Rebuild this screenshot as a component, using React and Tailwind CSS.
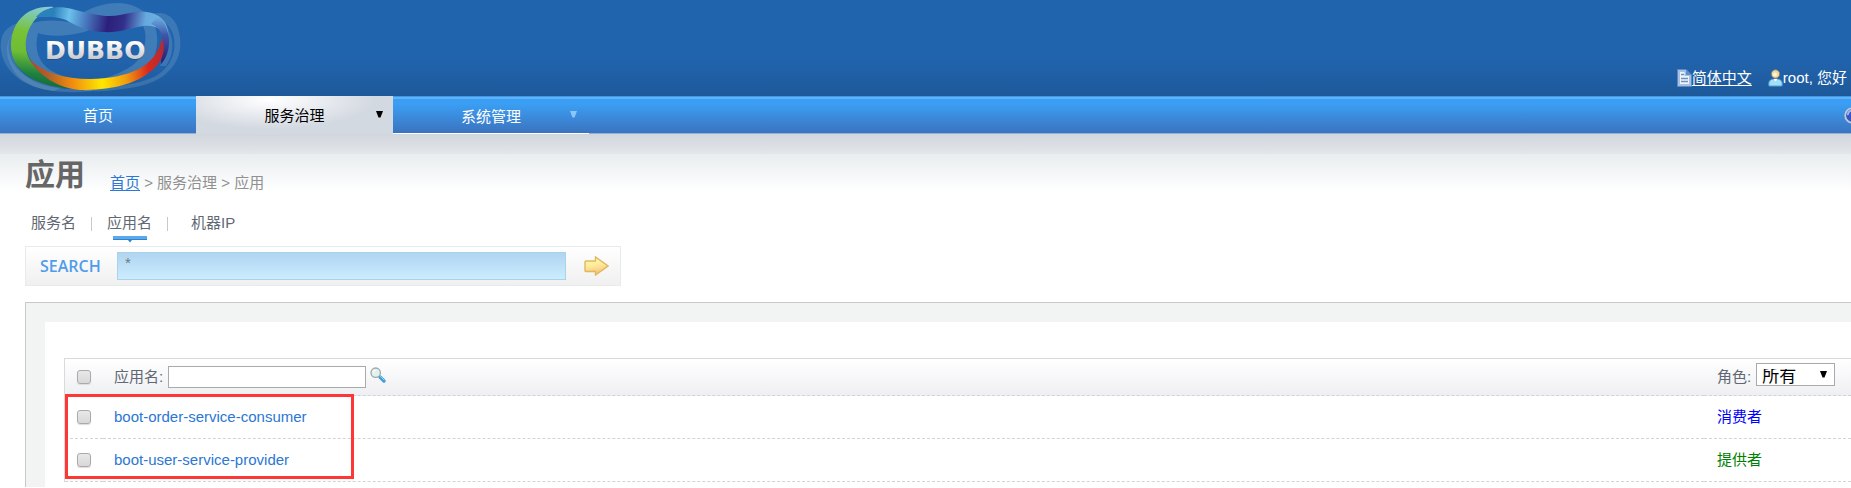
import React from "react";

function Logo() {
  return (
    <svg width="190" height="96" viewBox="0 0 190 96" role="img" aria-label="DUBBO">
      <defs>
        <linearGradient id="green" x1="0.7" y1="0" x2="0.6" y2="1">
          <stop offset="0" stopColor="#8ccbe0" />
          <stop offset="0.15" stopColor="#7cc89c" />
          <stop offset="0.35" stopColor="#78c234" />
          <stop offset="0.6" stopColor="#6fbd35" />
          <stop offset="0.85" stopColor="#1f8140" />
          <stop offset="1" stopColor="#126b3a" />
        </linearGradient>
        <linearGradient id="blue" gradientUnits="userSpaceOnUse" x1="38" y1="10" x2="168" y2="30">
          <stop offset="0" stopColor="#2a83bd" />
          <stop offset="0.12" stopColor="#2b80bb" />
          <stop offset="0.24" stopColor="#6cc0ec" />
          <stop offset="0.36" stopColor="#4a7fc4" />
          <stop offset="0.54" stopColor="#2c1f7a" />
          <stop offset="0.66" stopColor="#31308a" />
          <stop offset="0.82" stopColor="#66a9de" />
          <stop offset="1" stopColor="#6fb4e6" />
        </linearGradient>
        <linearGradient id="side" x1="0" y1="0" x2="0" y2="1">
          <stop offset="0" stopColor="#6fb4e6" />
          <stop offset="0.4" stopColor="#3f55a8" />
          <stop offset="1" stopColor="#2c1a70" />
        </linearGradient>
        <linearGradient id="fire" gradientUnits="userSpaceOnUse" x1="28" y1="70" x2="166" y2="55">
          <stop offset="0" stopColor="#c43a28" />
          <stop offset="0.14" stopColor="#b0602a" />
          <stop offset="0.3" stopColor="#f08a10" />
          <stop offset="0.52" stopColor="#ffe800" />
          <stop offset="0.7" stopColor="#f09a10" />
          <stop offset="0.86" stopColor="#d92a1c" />
          <stop offset="1" stopColor="#b02a38" />
        </linearGradient>
        <linearGradient id="metal" x1="0" y1="0" x2="0" y2="1">
          <stop offset="0.2" stopColor="#ffffff" />
          <stop offset="0.85" stopColor="#c2c4c8" />
        </linearGradient>
      </defs>
      <g fill="#9cc0d2" fillOpacity="0.26">
        <path d="M78 16C90 7 104 3 120 3C136 4 148 12 154 24C161 40 156 62 144 72C132 80 116 86 100 88L88 82C110 78 130 70 138 60C147 46 147 34 143 26L104 30Z" />
        <path d="M28 24C50 18 70 20 92 29C76 36 50 38 38 33C34 48 38 62 50 70C60 76 70 79 84 80L78 86C58 84 42 76 32 62C24 50 24 36 28 24Z" />
      </g>
      <g fill="#9cc0d2" fillOpacity="0.22" fillRule="evenodd">
        <path d="M22 22C4 26 0 36 1 50C4 72 24 88 54 91L62 87C34 84 12 72 9 52C7 38 12 34 22 30Z" />
        <path d="M14 32C2 44 6 66 22 80C40 92 66 94 92 91L90 88C60 91 38 86 26 76C12 64 8 48 14 38Z" />
        <path d="M152 14C168 10 178 20 180 38C183 60 168 80 140 86C122 90 100 92 84 91L84 88C114 88 140 84 156 76C172 66 176 52 174 38C172 26 164 20 152 20Z" />
        <path d="M162 20C174 32 176 52 166 66L160 66C168 50 168 36 160 26Z" />
      </g>
      <path d="M54 7C25 5 11 24 11 46C11 69 32 84 63 88L76 88C55 82 40 72 30 60C20 43 28 16 54 7Z" fill="url(#green)" />
      <path d="M36 17C45 6 60 6 72 9C92 14 106 18 120 15C138 11 153 9 163 20C168 26 169 34 168 39C162 28 154 25 143 26C130 28 120 33 102 32C85 31 75 25 66 20C56 16 48 17 36 17Z" fill="url(#blue)" />
      <path d="M158 16C170 26 171 44 167 54C165 59 163 62 161 64L162 38C161 30 157 26 151 24Z" fill="url(#side)" />
      <path d="M29 59C44 73 64 79 90 79C128 78 156 68 162 38C167 51 161 64 150 72C134 85 109 90 80 90C57 88 40 76 29 59Z" fill="url(#fire)" />
      <text x="45" y="60" className="font-['DejaVu_Sans',sans-serif] text-[25px] font-bold" fill="#24415f" fillOpacity="0.5">DUBBO</text>
      <text x="45" y="59" className="font-['DejaVu_Sans',sans-serif] text-[25px] font-bold" fill="url(#metal)">DUBBO</text>
    </svg>
  );
}

function DocIcon() {
  return (
    <svg width="15" height="18" viewBox="0 0 15 18" aria-hidden="true">
      <path d="M.5.5H9L14.5 6V17.5H.5Z" fill="#a8c0e4" stroke="#5d87c4" />
      <path d="M9 .5V6H14.5Z" fill="#5c8fd0" />
      <path d="M3 3H7.500V7H12V15H3Z" fill="#eef4fb" />
      <path d="M4 5.500H7M4 9.500H11M4 12.500H11" stroke="#6f93b8" strokeWidth="1.500" />
    </svg>
  );
}

function UserIcon() {
  return (
    <svg width="15" height="18" viewBox="0 0 15 18" aria-hidden="true">
      <path d="M1 17C0 11 3 10 7.500 10S15 11 14 17Z" fill="#9fe2f8" stroke="#5a9ad6" />
      <path d="M5.500 10L7.500 12.500L9.500 10Z" fill="#fff" />
      <circle cx="7.500" cy="5" r="4.200" fill="#ecd9a4" stroke="#8a7a5c" strokeWidth=".8" />
      <circle cx="7" cy="5.500" r="2" fill="#fdf6dc" />
    </svg>
  );
}

function SearchIcon() {
  return (
    <svg width="17" height="17" viewBox="0 0 17 17" aria-hidden="true">
      <path d="M10 10L14 14" stroke="#3f9bdc" strokeWidth="3.400" strokeLinecap="round" />
      <path d="M10.500 9.500L14 13" stroke="#8fd0f5" strokeWidth="1" strokeLinecap="round" />
      <circle cx="5.700" cy="5.700" r="4.700" fill="#e2f1ee" stroke="#9aa9a9" strokeWidth="1.300" />
      <path d="M3.300 5.700A2.400 2.400 0 0 1 5.700 3.300" stroke="#fff" fill="none" />
    </svg>
  );
}

function ArrowIcon() {
  return (
    <svg width="25" height="20" viewBox="0 0 25 20" aria-hidden="true">
      <defs>
        <linearGradient id="gold" x1="0.3" y1="0" x2="0.5" y2="1">
          <stop offset="0" stopColor="#fffbb0" />
          <stop offset="0.45" stopColor="#fdec9c" />
          <stop offset="1" stopColor="#fdb878" />
        </linearGradient>
      </defs>
      <path d="M1 6Q1 5 2 5H11.500V1L24 10L11.500 19V15.500H2Q1 15.500 1 14.500Z" fill="url(#gold)" stroke="#dfb95c" strokeWidth="1.400" />
    </svg>
  );
}

function Caret({ className }) {
  return (
    <svg width="7" height="7" viewBox="0 0 7 7" className={className} fill="currentColor" aria-hidden="true">
      <path d="M0 0H7L4.500 6.500H2.500Z" />
    </svg>
  );
}

function Check({ label }) {
  return (
    <input
      type="checkbox"
      aria-label={label}
      className="block size-3.5 appearance-none rounded-[3px] border border-[#aaa] bg-linear-to-b from-[#e8e8e8] to-[#d8d8d8] shadow-[0_1px_1px_#ddd]"
    />
  );
}

const apps = [
  { name: "boot-order-service-consumer", role: "消费者", color: "text-[#0000ff]" },
  { name: "boot-user-service-provider", role: "提供者", color: "text-[#008000]" },
];

export default function App() {
  return (
    <div className="overflow-hidden bg-white font-['Liberation_Sans','Noto_Sans_CJK_SC',sans-serif] text-[15px] leading-5 text-[#5f6873]">
      <header className="flex h-24 items-end justify-between bg-linear-to-b from-[#2164ae] from-60% to-[#1d599a] text-white">
        <Logo />
        <div className="flex gap-4 pr-1 pb-2">
          <a href="#lang" className="flex items-center">
            <DocIcon />
            <span className="underline underline-offset-2">简体中文</span>
          </a>
          <span className="flex items-center">
            <UserIcon />
            root, 您好
          </span>
        </div>
      </header>

      <nav className="flex h-[38px] items-stretch overflow-hidden bg-linear-to-b from-[#3a9ff4] from-20% to-[#3a72bd] shadow-[inset_0_-1px_#8fb1de,inset_0_1px_#3d97ea,inset_0_3px_#62b2f8]">
        <a href="#home" className="flex w-[196px] items-center justify-center pt-0.5 text-white">首页</a>
        <a href="#govern" className="grid w-[197px] grid-cols-[1fr_auto_1fr] items-center bg-[#d3d9e1] bg-radial-[at_38%_10%] from-white to-[#d3d9e1] to-60% px-2.5 pt-0.5 text-black">
          <span />
          服务治理
          <Caret className="mb-1 justify-self-end" />
        </a>
        <a href="#system" className="grid w-[196px] grid-cols-[1fr_auto_1fr] items-center border-b border-white px-3 pt-1 text-white">
          <span />
          系统管理
          <Caret className="mb-1 justify-self-end text-[#8cc6f8]" />
        </a>
        <div className="grow" />
        <button aria-label="帮助" className="-mr-2.5 self-center">
          <svg width="17" height="17" viewBox="0 0 17 17" aria-hidden="true">
            <circle cx="8.500" cy="8.500" r="7.300" fill="#3457c8" stroke="#c5c9d6" strokeWidth="1.800" />
            <path d="M4 8A4 4 0 0 1 8 3.500" stroke="#9fb6f2" strokeWidth="2" fill="none" />
          </svg>
        </button>
      </nav>

      <main className="bg-[linear-gradient(#d1d6dd,#e3e6ea_20px,#e9edef_20px,#fff_58px)] pt-[23px] pl-[25px]">
        <div className="flex items-end gap-[25px]">
          <h1 className="text-[30px] leading-9 font-bold text-[#666]">应用</h1>
          <p className="text-[#909090]">
            <a href="#home" className="text-[#2b77d3] underline underline-offset-2">首页</a> &gt; 服务治理 &gt; 应用
          </p>
        </div>

        <div className="mt-5 flex h-[33px] items-start pl-1.5">
          <a href="#service">服务名</a>
          <span className="mx-[15px] mt-1 h-3.5 w-px bg-[#c9c9cd]" />
          <a href="#app" className="flex flex-col items-center">
            应用名
            <svg width="34" height="7" viewBox="0 0 34 7" className="mt-[3px]" aria-hidden="true">
              <path d="M0 0H34V4H0Z" fill="#58a9ee" />
              <path d="M0 3H34V4H19L17 6.500L15 4H0Z" fill="#3283c8" />
            </svg>
          </a>
          <span className="mx-[15px] mt-1 h-3.5 w-px bg-[#c9c9cd]" />
          <a href="#ip" className="ml-2">机器IP</a>
        </div>

        <form className="flex h-10 w-[596px] items-center border border-[#e8eaeb] bg-linear-to-b from-white to-[#f0f0f0] pl-3.5" onSubmit={(e) => e.preventDefault()}>
          <label htmlFor="keyword" className="w-[77px] font-['Open_Sans',sans-serif] text-[16px] font-semibold text-[#4f9dea]">SEARCH</label>
          <input id="keyword" defaultValue="*" className="h-7 w-[449px] border border-[#a9d3e6] bg-linear-to-b from-[#b0d4f2] to-[#ccedff] px-[7px] pb-2 text-[15px] text-[#777]" />
          <button aria-label="SEARCH" className="ml-[18px]"><ArrowIcon /></button>
        </form>

        <section className="mt-4 border-t border-l border-[#c8caca] bg-[#f2f4f3] pt-[19px] pl-[19px]">
          <div className="relative bg-white pt-9 pb-[5px] pl-[19px]">
            <table className="w-full table-fixed border-separate border-spacing-0 border-t border-l border-[#d9dadb]">
              <colgroup>
                <col className="w-[38px]" />
                <col />
                <col className="w-[147px]" />
              </colgroup>
              <thead>
                <tr className="h-[37px] bg-linear-to-b from-white to-[#eeeff2]">
                  <th className="border-b border-dashed border-[#d3d3d3] pl-3"><Check label="全选" /></th>
                  <th className="border-b border-dashed border-[#d3d3d3] pl-[11px] text-left font-normal">
                    <div className="flex items-center">
                      <label htmlFor="appName">应用名:</label>
                      <input id="appName" className="ml-[5px] h-[22px] w-[198px] border border-[#aaa] bg-white px-1" />
                      <button aria-label="搜索" className="ml-1 pb-1"><SearchIcon /></button>
                    </div>
                  </th>
                  <th className="border-b border-dashed border-[#d3d3d3] pl-[13px] text-left font-normal">
                    <div className="flex items-center">
                      <label htmlFor="role">角色:</label>
                      <div className="ml-[5px] grid pb-1.5">
                        <select id="role" className="col-start-1 row-start-1 h-[23px] w-[79px] appearance-none border border-[#aaa] bg-white pt-[5px] pl-[5px] text-[17px] leading-4 text-black">
                          <option>所有</option>
                          <option>消费者</option>
                          <option>提供者</option>
                        </select>
                        <Caret className="pointer-events-none z-10 col-start-1 row-start-1 mt-2 mr-2 justify-self-end text-black" />
                      </div>
                    </div>
                  </th>
                </tr>
              </thead>
              <tbody>
                {apps.map((app) => (
                  <tr key={app.name} className="h-[43px]">
                    <td className="border-b border-dashed border-[#d3d3d3] pl-3"><Check label={app.name} /></td>
                    <td className="border-b border-dashed border-[#d3d3d3] pl-[11px]">
                      <a href="#detail" className="text-[#2b77d3]">{app.name}</a>
                    </td>
                    <td className={`border-b border-dashed border-[#d3d3d3] pl-[13px] ${app.color}`}>{app.role}</td>
                  </tr>
                ))}
              </tbody>
            </table>
            <div className="pointer-events-none absolute top-[72px] left-5 h-[85px] w-[289px] border-[3px] border-[#ff3636]" />
          </div>
        </section>
      </main>
    </div>
  );
}
